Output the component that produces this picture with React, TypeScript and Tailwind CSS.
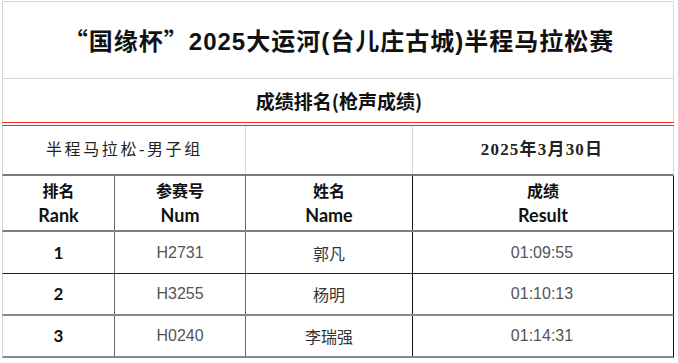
const cjk = '"Noto Sans CJK SC", sans-serif';

const rows = [
  { rank: '1', num: 'H2731', name: '郭凡', result: '01:09:55' },
  { rank: '2', num: 'H3255', name: '杨明', result: '01:10:13' },
  { rank: '3', num: 'H0240', name: '李瑞强', result: '01:14:31' },
];

export default function App() {
  return (
    <div className="w-[678px] h-[363px] overflow-hidden bg-white">
      <div className="ml-[2px] mt-[1px] w-[672px]">
        {/* title */}
        <div className="h-[78px] border border-[#d4d4d4] flex items-center justify-center">
          <h1
            className="text-[24px] font-bold text-[#111] tracking-[1px] pt-[1px] pl-[2px]"
            style={{ fontFamily: '"Liberation Sans", ' + cjk }}
          >
            <span style={{ fontFamily: cjk }}>“国缘杯”</span>2025大运河(台儿庄古城)半程马拉松赛
          </h1>
        </div>

        {/* subtitle */}
        <div className="h-[43px] border-x border-[#d4d4d4] flex items-center justify-center">
          <h2 className="text-[19px] font-bold text-[#111] pl-[2px] pt-[1px]" style={{ fontFamily: cjk }}>
            成绩排名(枪声成绩)
          </h2>
        </div>
        <div className="h-[4px] border-y border-[#ff2a2a]" />

        {/* category row */}
        <div className="h-[50px] flex border-l border-r border-[#d4d4d4] border-b-2 border-b-[#7a7a7a]">
          <div
            className="w-[242px] flex items-center pl-[43px] text-[16px] tracking-[2.6px] text-[#222]"
            style={{ fontFamily: '"Liberation Serif", "Noto Sans CJK SC", serif' }}
          >
            半程马拉松-男子组
          </div>
          <div className="w-[167px] border-l border-[#dadada]" />
          <div
            className="flex-1 border-l border-[#d4d4d4] flex items-center justify-center font-bold text-[17px] tracking-[1.2px] text-[#222] pr-[2px]"
            style={{ fontFamily: '"Liberation Serif", "Noto Sans CJK SC", serif' }}
          >
            2025年3月30日
          </div>
        </div>

        {/* header row */}
        <div
          className="h-[56px] flex border-l border-[#d4d4d4] border-r border-r-[#111] border-b-2 border-b-[#808080] font-bold text-[#111] leading-[24px]"
          style={{ fontFamily: '"Lato", ' + cjk }}
        >
          <div className="w-[111px] flex flex-col items-center justify-center">
            <span className="text-[16px]">排名</span>
            <span className="text-[18px]">Rank</span>
          </div>
          <div className="w-[131px] border-l border-[#666] flex flex-col items-center justify-center">
            <span className="text-[16px]">参赛号</span>
            <span className="text-[18px]">Num</span>
          </div>
          <div className="w-[167px] border-l border-[#666] flex flex-col items-center justify-center">
            <span className="text-[16px]">姓名</span>
            <span className="text-[18px]">Name</span>
          </div>
          <div className="flex-1 border-l border-[#111] flex flex-col items-center justify-center">
            <span className="text-[16px]">成绩</span>
            <span className="text-[18px]">Result</span>
          </div>
        </div>

        {/* data rows */}
        {rows.map((r, i) => (
          <div
            key={r.rank}
            className={
              'h-[42px] flex border-l border-[#d4d4d4] border-r border-r-[#111] text-[16px] ' +
              (i === 0 ? 'border-b border-b-[#222]' : 'border-b-2 border-b-[#8a8a8a]')
            }
          >
            <div
              className="w-[111px] flex items-center justify-center text-[#111] font-bold text-[17px]"
              style={{ fontFamily: '"Lato", sans-serif' }}
            >
              {r.rank}
            </div>
            <div
              className="w-[131px] border-l border-[#666] flex items-center justify-center text-[#555]"
              style={{ fontFamily: '"Liberation Sans", sans-serif' }}
            >
              {r.num}
            </div>
            <div
              className="w-[167px] border-l border-[#666] flex items-center justify-center text-[#333]"
              style={{ fontFamily: cjk }}
            >
              {r.name}
            </div>
            <div
              className="flex-1 border-l border-[#111] flex items-center justify-center text-[#555] pr-[2px]"
              style={{ fontFamily: '"Liberation Sans", sans-serif' }}
            >
              {r.result}
            </div>
          </div>
        ))}
      </div>
    </div>
  );
}
